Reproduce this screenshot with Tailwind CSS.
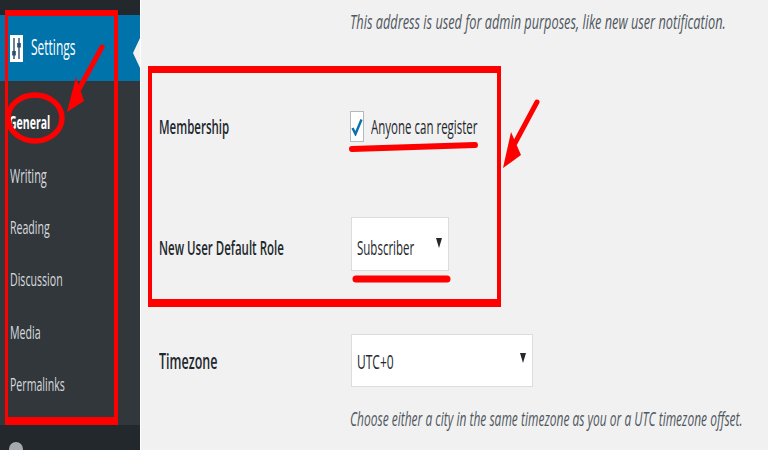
<!DOCTYPE html>
<html lang="en">
<head>
  <meta charset="UTF-8" />
  <title>General Settings</title>
  <script src="https://cdn.jsdelivr.net/npm/@tailwindcss/browser@4"></script>
</head>
<body class="relative w-[768px] h-[450px] overflow-hidden bg-[#f1f1f1] font-['Open_Sans',sans-serif] text-[11.5px] text-[#23282d]">
  <div class="flex h-[450px]">
    <!-- sidebar -->
    <aside class="relative flex flex-col w-[140px] bg-[#23282d]">
      <div class="h-[15px] shrink-0"></div>
      <div class="relative flex items-center gap-[8px] h-[66px] shrink-0 pl-[10px] bg-[#0073aa] text-white">
        <svg width="13" height="27" viewBox="0 0 13 27">
          <rect width="13" height="27" fill="#fff"/>
          <path d="M4 3v21M9 3v21" stroke="#2a4f6e" stroke-width="1.4"/>
          <rect x="2.2" y="16" width="3.6" height="4.5" fill="#2a4f6e"/>
          <rect x="7.2" y="8" width="3.6" height="4.5" fill="#2a4f6e"/>
        </svg>
        <span class="inline-block origin-left scale-y-[1.75] text-[12px]">Settings</span>
        <div class="absolute right-0 top-[23px] w-0 h-0 border-y-[15px] border-y-transparent border-r-[7px] border-r-[#f1f1f1]"></div>
      </div>
      <nav class="flex flex-col h-[344px] shrink-0 pt-[15px] bg-[#32373c] text-[#d6dadd] text-[10.6px]">
        <a class="flex items-center h-[52.5px] pl-[9px] pt-[3px] font-bold text-white"><span class="inline-block origin-left scale-y-[1.75] text-[10.5px]">General</span></a>
        <a class="flex items-center h-[52.5px] pl-[10px] pt-[3px]"><span class="inline-block origin-left scale-y-[1.75] text-[11px]">Writing</span></a>
        <a class="flex items-center h-[52.5px] pl-[10px] pt-[3px]"><span class="inline-block origin-left scale-y-[1.75]">Reading</span></a>
        <a class="flex items-center h-[52.5px] pl-[10px] pt-[3px]"><span class="inline-block origin-left scale-y-[1.75]">Discussion</span></a>
        <a class="flex items-center h-[52.5px] pl-[10px] pt-[3px]"><span class="inline-block origin-left scale-y-[1.75]">Media</span></a>
        <a class="flex items-center h-[52.5px] pl-[10px] pt-[3px]"><span class="inline-block origin-left scale-y-[1.75]">Permalinks</span></a>
      </nav>
      <div class="flex-1 pl-[9px] pt-[17px] overflow-hidden">
        <div class="w-[14px] h-[20px] rounded-full bg-[#a7aaad]"></div>
      </div>
    </aside>

    <!-- settings form -->
    <main class="flex-1 flex flex-col border-l border-white pl-[18px]">
      <div class="flex items-center h-[24px] mt-[10px] pl-[191px]">
        <p class="inline-block origin-left scale-y-[1.6] italic text-[12.75px] text-[#50575e] whitespace-nowrap">This address is used for admin purposes, like new user notification.</p>
      </div>

      <div class="flex items-center h-[31px] mt-[77px]">
        <div class="w-[192px] pt-[1px] font-semibold"><span class="inline-block origin-left scale-y-[1.7]">Membership</span></div>
        <div class="w-[14px] h-[31px] -ml-[1px] bg-white border border-[#b4b9be] flex items-center justify-center">
          <svg width="12" height="18" viewBox="0 0 12 18"><path d="M1.5 10l3 6L10.5 1.5" fill="none" stroke="#0b6fb0" stroke-width="2.4"/></svg>
        </div>
        <span class="inline-block origin-left scale-y-[1.7] ml-[7px] mt-[1px]">Anyone can register</span>
      </div>

      <div class="flex items-center h-[54px] mt-[75px]">
        <div class="w-[192px] pt-[8px] font-semibold"><span class="inline-block origin-left scale-y-[1.7]">New User Default Role</span></div>
        <div class="flex items-center justify-between w-[98px] h-[54px] pl-[5px] pr-[6px] bg-white border border-[#dcdcdc]">
          <span class="inline-block origin-left scale-y-[1.7] mt-[8px]">Subscriber</span>
          <svg class="mb-[2px]" width="6" height="10" viewBox="0 0 6 10"><path d="M0 0h6L3 10z" fill="#23282d"/></svg>
        </div>
      </div>

      <div class="flex items-center h-[53px] mt-[63px]">
        <div class="w-[192px] pt-[3px] font-semibold"><span class="inline-block origin-left scale-y-[1.7] text-[12.5px]">Timezone</span></div>
        <div class="flex items-center justify-between w-[182px] h-[53px] pl-[5px] pr-[6px] bg-white border border-[#dcdcdc]">
          <span class="inline-block origin-left scale-y-[1.7] mt-[3px] text-[12px]">UTC+0</span>
          <svg class="mb-[5px]" width="6" height="10" viewBox="0 0 6 10"><path d="M0 0h6L3 10z" fill="#23282d"/></svg>
        </div>
      </div>

      <div class="flex items-center h-[24px] mt-[21px] pl-[191px]">
        <p class="inline-block origin-left scale-y-[1.6] italic text-[12px] text-[#50575e] whitespace-nowrap">Choose either a city in the same timezone as you or a UTC timezone offset.</p>
      </div>
    </main>
  </div>

  <!-- red annotations drawn over the screenshot -->
  <svg class="absolute left-0 top-0 pointer-events-none" width="768" height="450" viewBox="0 0 768 450">
    <g fill="#ff0000">
      <path fill-rule="evenodd" d="M5 10H118V425H5ZM8 16V417H114V16Z"/>
      <path fill-rule="evenodd" d="M148 66H501V307H148ZM152 73V299H497V73Z"/>
      <path d="M67 112L76 77L84 101Z"/>
      <path d="M503 168L511 132L521 155Z"/>
    </g>
    <g fill="none" stroke="#ff0000" stroke-linecap="round">
      <ellipse cx="35" cy="118" rx="27" ry="23" stroke-width="5.5"/>
      <path d="M102 47L79 89" stroke-width="5"/>
      <path d="M537 102L515 143" stroke-width="5"/>
      <path d="M352 149L475 145" stroke-width="6"/>
      <path d="M356 279H447" stroke-width="7"/>
    </g>
  </svg>
</body>
</html>
